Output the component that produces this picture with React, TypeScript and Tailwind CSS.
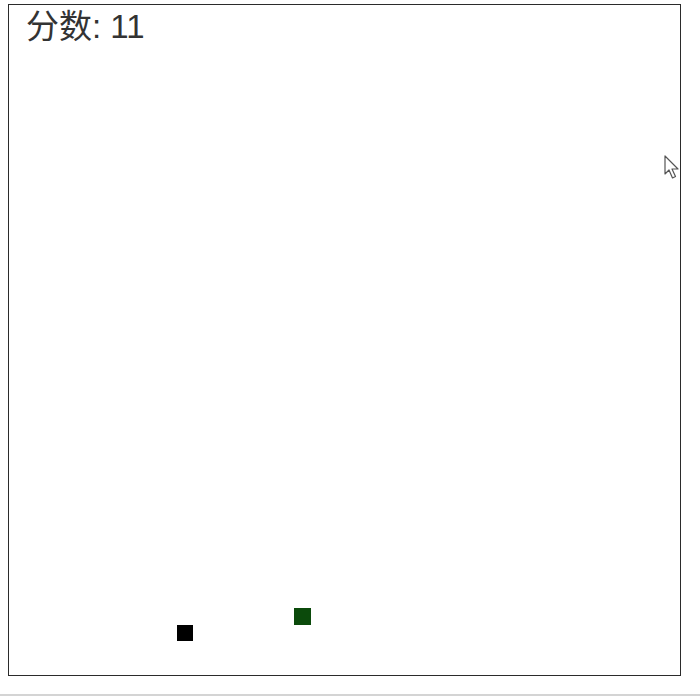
export default function App() {
  return (
    <div className="w-[700px] h-[697px] bg-white overflow-hidden flex flex-col" style={{ fontFamily: '"Liberation Sans", "Noto Sans CJK SC", sans-serif' }}>
      <div className="pl-2 pt-1">
        {/* game board */}
        <div className="relative w-[673px] h-[672px] border-[1.5px] border-[#2b2b2b]">
          <div className="pl-[17px] pt-[5px] text-[33px] leading-[33px] text-[#333]">分数: 11</div>
          <div className="absolute left-[168px] top-[620px] w-[16px] h-[16px] bg-black" />
          <div className="absolute left-[285px] top-[603px] w-[17px] h-[17px] bg-[#0b4a0b]" />
          <svg className="absolute left-[655px] top-[150px]" width="16" height="26" viewBox="0 0 16 26">
            <path d="M1 1 L1 19 L5 15 L8.5 23 L11.5 21.5 L8 14 L14 14 Z" fill="white" stroke="#555" strokeWidth="1.2" strokeLinejoin="round" />
          </svg>
        </div>
      </div>
      <div className="mt-[18px] h-[2px] bg-[#d4d4d4]" />
    </div>
  );
}
